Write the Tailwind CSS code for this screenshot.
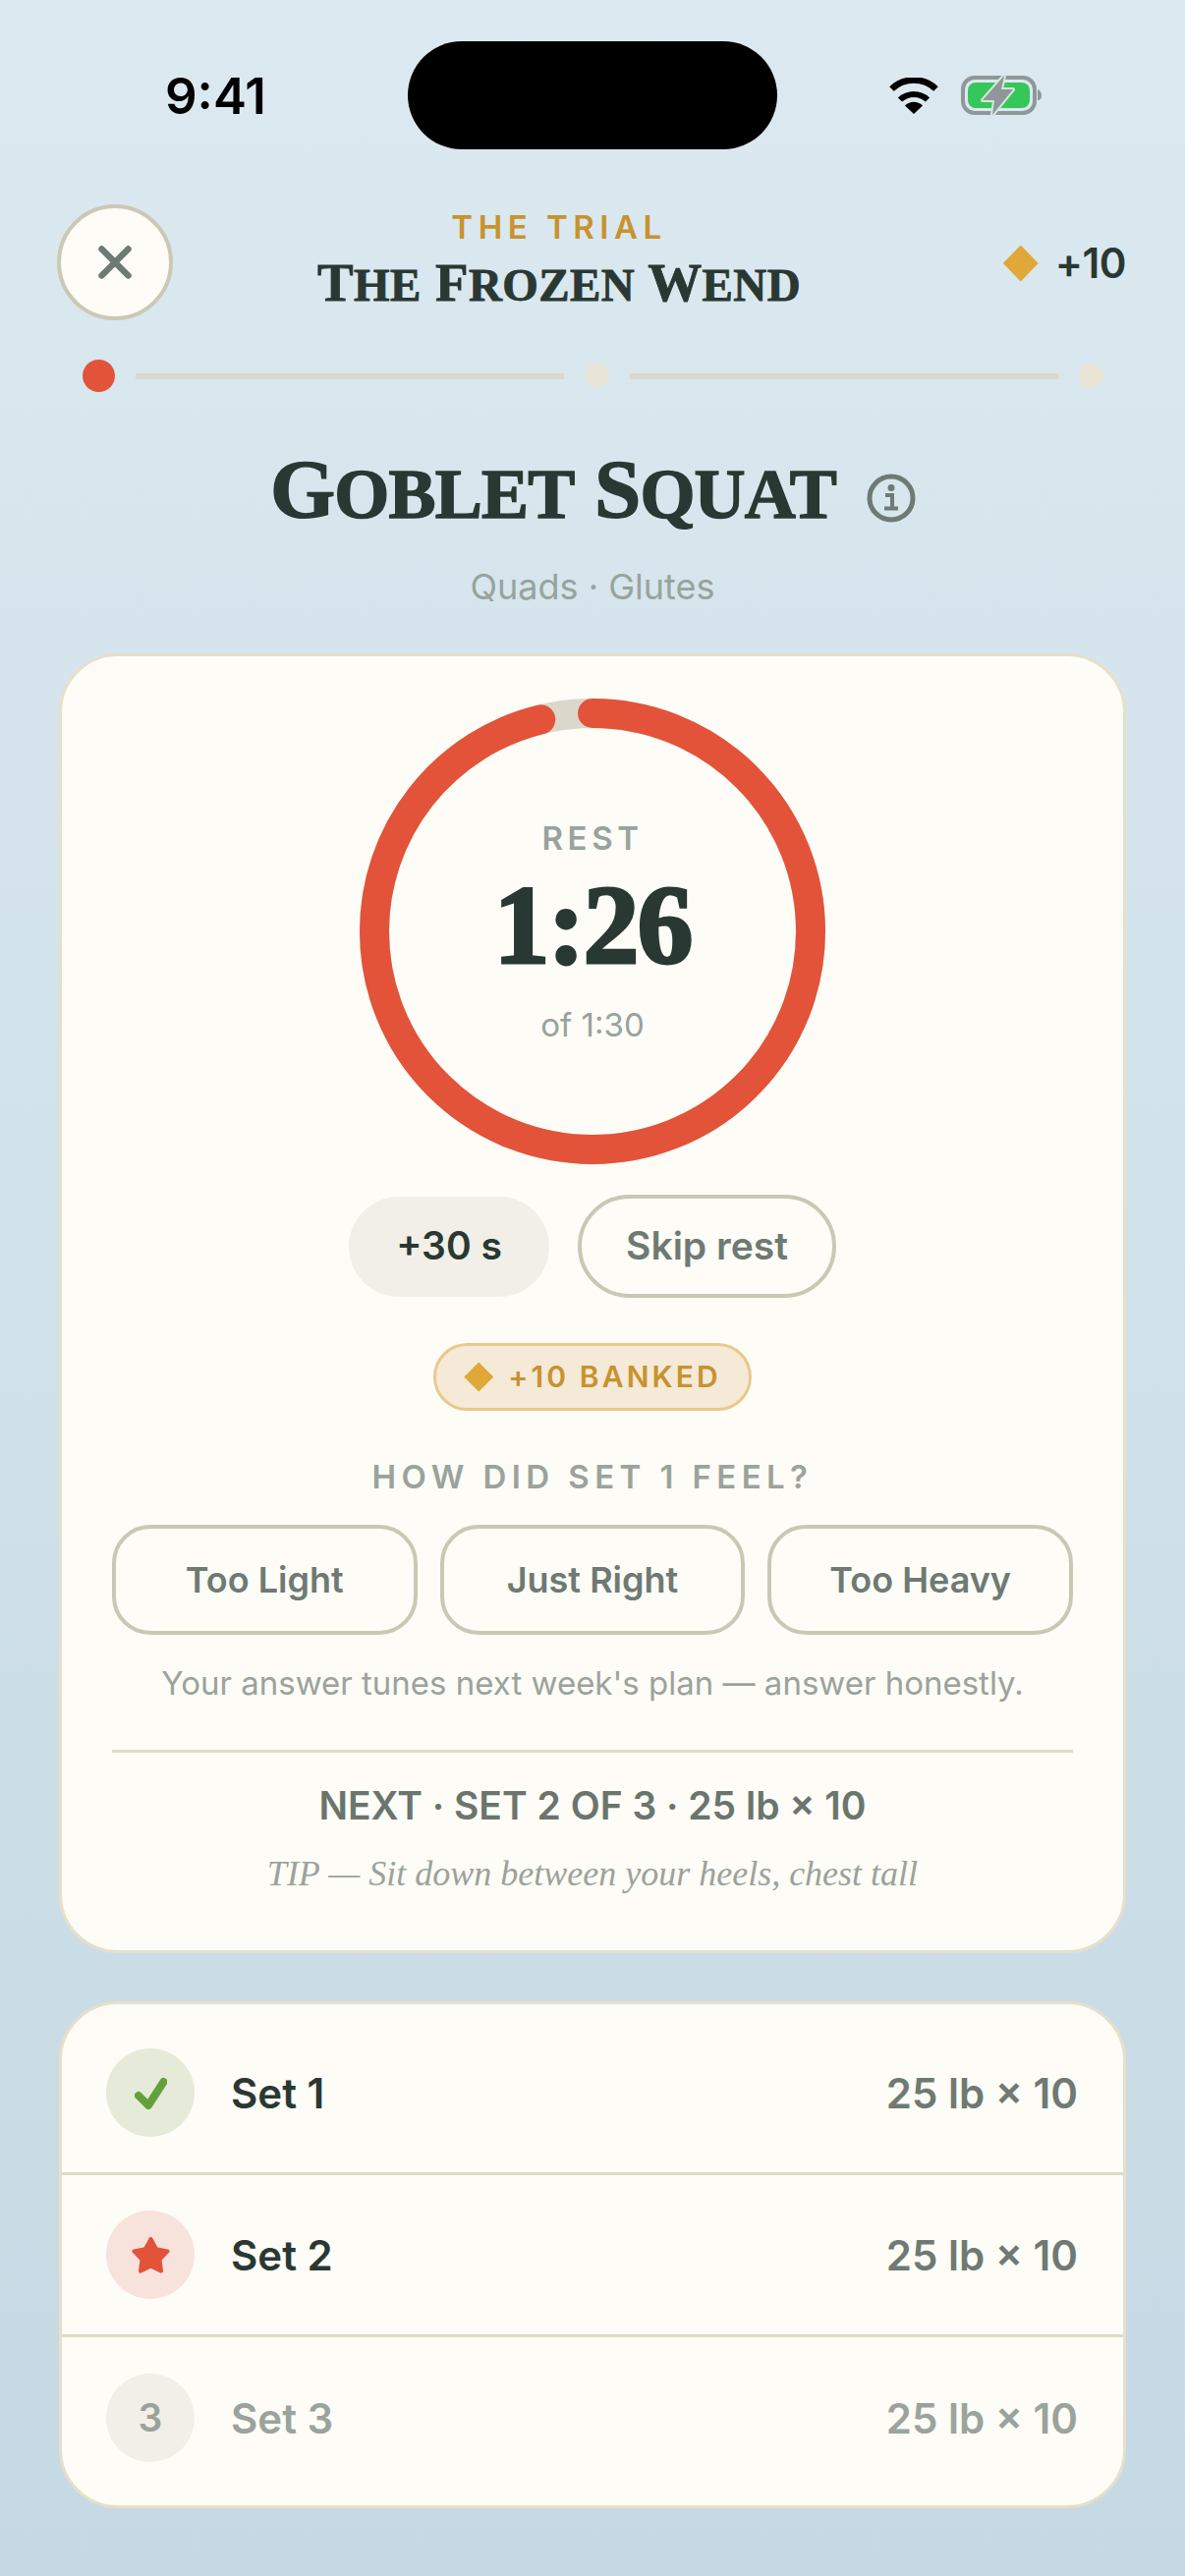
<!DOCTYPE html>
<html lang="en">

<head>
    <meta charset="UTF-8">
    <meta name="viewport" content="width=device-width, initial-scale=1.0">
    <title>The Frozen Wend</title>
    <script src="https://cdn.jsdelivr.net/npm/@tailwindcss/browser@4"></script>
</head>

<body class="w-[1206px] h-[2622px] overflow-hidden bg-gradient-to-b from-[#dce9f0] to-[#c5d9e4] font-['Inter',sans-serif] text-[#2a3833]">

    <!-- status bar -->
    <div class="h-[186px] pt-[42px] grid grid-cols-[415px_376px_415px]">
        <div class="h-[110px] flex items-center pl-[168px] text-[51px] font-semibold text-black leading-none">9:41</div>
        <div class="h-[110px] bg-black rounded-[55px]"></div>
        <div class="h-[110px] flex items-center pl-[114px] gap-[23px]">
            <svg class="w-[50px] h-[37px]" viewBox="0 0 50 37" fill="none">
                <path d="M25 37 16 28.5C21 23.5 29 23.500 34 28.500Z" fill="#000" />
                <path d="M11 22.500C18.500 15 31.500 15 39 22.500" stroke="#000" stroke-width="6" />
                <path d="M2.500 11.500C15 -.5 35 -.5 47.500 11.500" stroke="#000" stroke-width="6.500" />
            </svg>
            <svg class="w-[82px] h-[42px]" viewBox="0 0 82 42" fill="none">
                <rect x="2" y="3" width="73" height="36" rx="12" stroke="#8f979b" stroke-width="4" />
                <rect x="7" y="8" width="63" height="26" rx="8" fill="#35c75a" />
                <path d="M78 15c3 1 4 3.500 4 6s-1 5-4 5z" fill="#8f979b" />
                <path d="M44 1 22 26H34L32 41 53 15H41Z" fill="#8f979b" stroke="#d5e8dc" stroke-width="4" stroke-linejoin="round" paint-order="stroke" />
            </svg>
        </div>
    </div>

    <!-- header -->
    <div class="h-[180px] pl-[58px] pr-[60px] grid grid-cols-[118px_786px_1fr] items-start">
        <button class="mt-[22px] w-[118px] h-[118px] rounded-full bg-[#fdfcf6] border-[4px] border-[#cbc8b6] flex items-center justify-center">
            <svg class="w-[34px] h-[34px]" viewBox="0 0 34 34" fill="none">
                <path d="M3.500 3.500 30.500 30.500M30.500 3.500 3.500 30.500" stroke="#6e7a73" stroke-width="6.500" stroke-linecap="round" />
            </svg>
        </button>
        <div class="mt-[25px] flex flex-col items-center">
            <div class="text-[33px] leading-[40px] font-semibold tracking-[5.5px] text-[#c8922e]">THE TRIAL</div>
            <div class="mt-[8px] font-['Liberation_Serif',serif] font-bold text-[55px] leading-[48px] whitespace-nowrap text-[#2a3833] tracking-[0.4px] [-webkit-text-stroke:0.8px_#2a3833]">
                T<span class="text-[67px] [font-variant:small-caps]">he</span>
                F<span class="text-[67px] [font-variant:small-caps]">rozen</span>
                W<span class="text-[67px] [font-variant:small-caps]">end</span>
            </div>
        </div>
        <div class="mt-[57px] flex items-center justify-end gap-[17px]">
            <span class="w-[36px] h-[37px] bg-[#e0a838] [clip-path:polygon(50%_0,100%_50%,50%_100%,0_50%)]"></span>
            <span class="text-[42px] font-semibold leading-[50px] tracking-[-0.5px]">+10</span>
        </div>
    </div>

    <!-- progress -->
    <div class="h-[33px] ml-[84px] w-[1039px] flex items-center gap-[21px]">
        <div class="w-[33px] h-[33px] rounded-full bg-[#e2533a]"></div>
        <div class="flex-1 h-[6px] bg-[#dbd7ca]"></div>
        <div class="w-[25px] h-[25px] rounded-full bg-[#e8e4d6]"></div>
        <div class="flex-1 h-[6px] bg-[#dbd7ca]"></div>
        <div class="w-[25px] h-[25px] rounded-full bg-[#e8e4d6]"></div>
    </div>

    <!-- exercise title -->
    <div class="mt-[61px] h-[90px] ml-[275px] flex items-center gap-[31px]">
        <div class="mb-[20px] font-['Liberation_Serif',serif] font-bold text-[85px] leading-[90px] whitespace-nowrap tracking-[-0.8px] [-webkit-text-stroke:1.5px_#2a3833]">
            G<span class="text-[103px] [font-variant:small-caps]">oblet</span>
            S<span class="text-[103px] [font-variant:small-caps]">quat</span>
        </div>
        <svg class="mt-[4px] w-[50px] h-[50px]" viewBox="0 0 50 50" fill="none">
            <circle cx="25" cy="25" r="22" stroke="#6e7a73" stroke-width="5" />
            <circle cx="25" cy="14.500" r="3.500" fill="#6e7a73" />
            <path d="M19 22H26V35M18 35.500H32" stroke="#6e7a73" stroke-width="4" />
        </svg>
    </div>
    <div class="mt-[25px] text-center text-[36px] leading-[44px] text-[#98a39d]">Quads · Glutes</div>

    <!-- rest card -->
    <div class="mt-[46px] mx-[60px] h-[1323px] rounded-[60px] bg-[#fdfcf6] border-[3px] border-[#e6dfcb] flex flex-col items-center">
        <div class="relative mt-[43px] w-[474px] h-[474px]">
            <svg class="w-[474px] h-[474px]" viewBox="0 0 474 474" fill="none">
                <circle cx="237" cy="237" r="222" stroke="#dbd7ca" stroke-width="30" />
                <circle cx="237" cy="237" r="222" stroke="#e2533a" stroke-width="30" stroke-linecap="round" stroke-dasharray="1341 1395" transform="rotate(-90 237 237)" />
            </svg>
            <div class="absolute inset-0 flex flex-col items-center">
                <div class="mt-[122px] text-[33px] leading-[40px] font-semibold tracking-[4.6px] text-[#98a39d]">REST</div>
                <div class="mt-[9px] font-['Liberation_Serif',serif] font-bold text-[114px] leading-[120px] tracking-[-2px] [-webkit-text-stroke:3px_#2a3833]">1:26</div>
                <div class="mt-[21px] text-[33px] leading-[40px] text-[#98a39d]">of 1:30</div>
            </div>
        </div>
        <div class="mt-[31px] flex items-center gap-[29px]">
            <button class="w-[204px] h-[102px] rounded-full bg-[#f1efe7] text-[39px] font-semibold text-[#2a3833]">+30 s</button>
            <button class="w-[263px] h-[105px] rounded-full border-[4px] border-[#c9c8b5] text-[39px] font-semibold text-[#6e7a73]">Skip rest</button>
        </div>
        <div class="mt-[46px] w-[324px] h-[69px] rounded-full bg-[#f5ead8] border-[3px] border-[#e8c98c] flex items-center justify-center gap-[15px]">
            <span class="w-[30px] h-[30px] bg-[#e0a838] [clip-path:polygon(50%_0,100%_50%,50%_100%,0_50%)]"></span>
            <span class="text-[30px] font-semibold tracking-[3.1px] text-[#c8922e]">+10 BANKED</span>
        </div>
        <div class="mt-[47px] text-[33px] leading-[40px] font-semibold tracking-[5.4px] text-[#9aa39c]">HOW DID SET 1 FEEL?</div>
        <div class="mt-[29px] w-[978px] grid grid-cols-3 gap-[23px]">
            <button class="h-[112px] rounded-[39px] border-[4px] border-[#c9c8b5] text-[36px] font-semibold text-[#6e7a73]">Too Light</button>
            <button class="h-[112px] rounded-[39px] border-[4px] border-[#c9c8b5] text-[36px] font-semibold text-[#6e7a73]">Just Right</button>
            <button class="h-[112px] rounded-[39px] border-[4px] border-[#c9c8b5] text-[36px] font-semibold text-[#6e7a73]">Too Heavy</button>
        </div>
        <div class="mt-[29px] text-[33px] leading-[40px] text-[#9aa39c]">Your answer tunes next week's plan — answer honestly.</div>
        <div class="mt-[48px] w-[978px] h-[3px] bg-[#dddbc8]"></div>
        <div class="mt-[30px] text-[39px] leading-[48px] font-semibold text-[#6a756e]">NEXT · SET 2 OF 3 · 25 lb × 10</div>
        <div class="mt-[22px] font-['Liberation_Serif',serif] italic text-[36px] leading-[46px] text-[#9aa39c]">TIP — Sit down between your heels, chest tall</div>
    </div>

    <!-- sets -->
    <div class="mt-[49px] mx-[60px] h-[516px] rounded-[60px] bg-[#fdfcf6] border-[3px] border-[#e6dfcb] overflow-hidden">
        <div class="h-[174px] pl-[45px] pr-[46px] pt-[9px] flex items-center border-b-[3px] border-[#dddbc8]">
            <div class="w-[90px] h-[90px] rounded-full bg-[#e5ebd8] flex items-center justify-center">
                <svg class="w-[33px] h-[33px]" viewBox="0 0 33 33" fill="none">
                    <path d="M4 19 14 29 29.500 5" stroke="#64a03e" stroke-width="8" stroke-linecap="round" stroke-linejoin="round" />
                </svg>
            </div>
            <span class="ml-[37px] text-[42px] font-semibold">Set 1</span>
            <span class="ml-auto text-[42px] font-semibold text-[#6e7a73]">25 lb × 10</span>
        </div>
        <div class="h-[165px] pl-[45px] pr-[46px] flex items-center border-b-[3px] border-[#dddbc8]">
            <div class="w-[90px] h-[90px] rounded-full bg-[#f8e2dc] flex items-center justify-center">
                <svg class="w-[41px] h-[39px]" viewBox="0 0 41 39">
                    <path d="M20.500 3 26.100 13.300 37.600 15.400 29.500 24 31 35.600 20.500 30.500 10 35.600 11.500 24 3.400 15.400 14.900 13.300Z" fill="#e2533a" stroke="#e2533a" stroke-width="4" stroke-linejoin="round" />
                </svg>
            </div>
            <span class="ml-[37px] text-[42px] font-semibold">Set 2</span>
            <span class="ml-auto text-[42px] font-semibold text-[#6e7a73]">25 lb × 10</span>
        </div>
        <div class="h-[171px] pl-[45px] pr-[46px] pb-[7px] flex items-center">
            <div class="w-[90px] h-[90px] rounded-full bg-[#f1efe7] flex items-center justify-center text-[39px] font-semibold text-[#9aa39c]">3</div>
            <span class="ml-[37px] text-[42px] font-semibold text-[#9aa39c]">Set 3</span>
            <span class="ml-auto text-[42px] font-semibold text-[#9aa39c]">25 lb × 10</span>
        </div>
    </div>

</body>

</html>
